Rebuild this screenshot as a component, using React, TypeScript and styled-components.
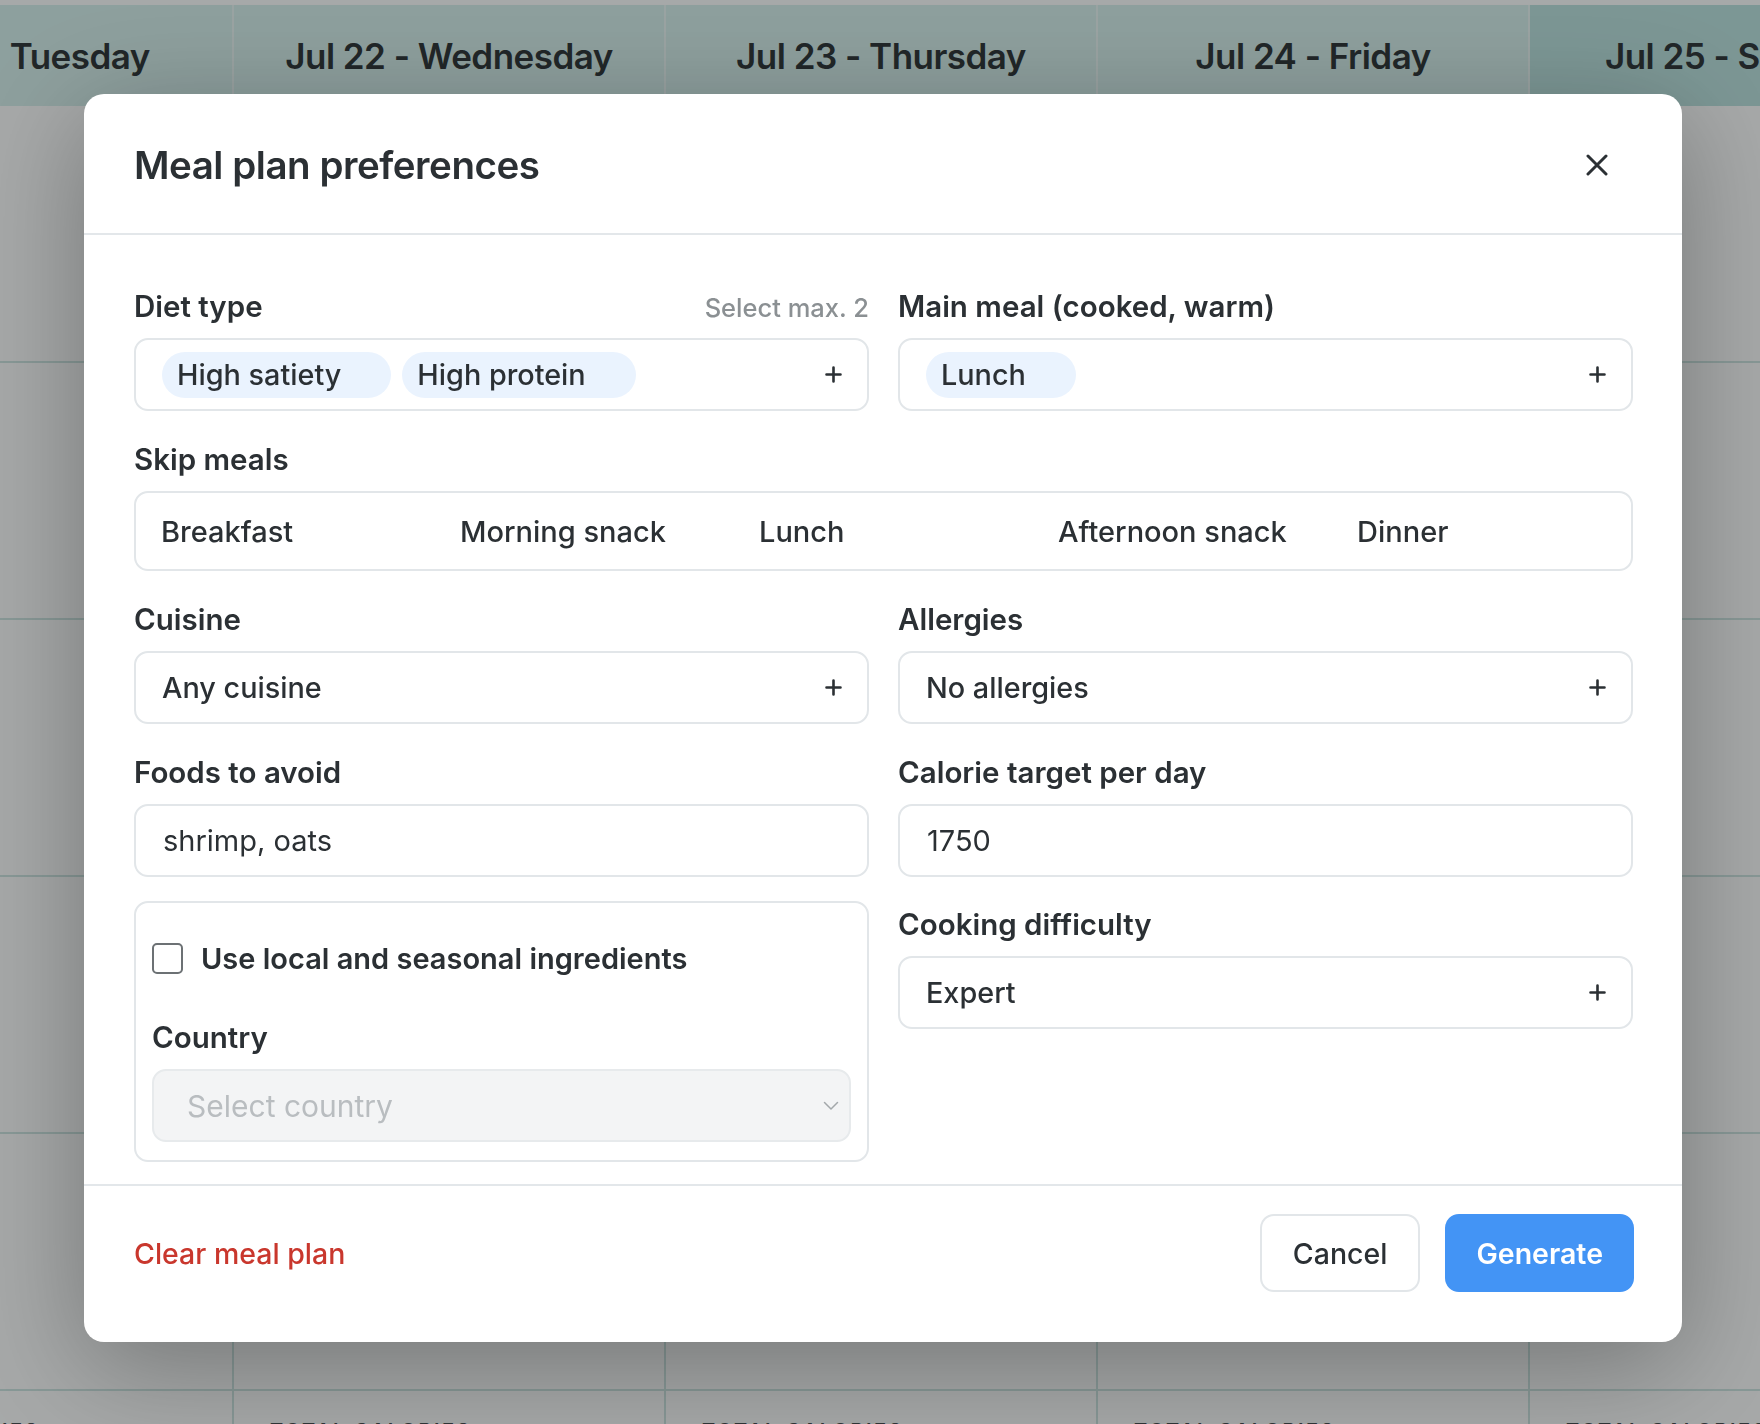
import React from "react";
import styled, { createGlobalStyle } from "styled-components";

const Global = createGlobalStyle`
	html, body {
		margin: 0;
		padding: 0;
		background: #ffffff;
		overflow: hidden;
	}
	body {
		font-family: Inter, "Noto Sans", "Liberation Sans", sans-serif;
		color: #2b3034;
	}
	* { box-sizing: border-box; }
`;

/* ---------- calendar behind the dialog ---------- */

const Page = styled.div`
	width: 1760px;
	height: 1424px;
	overflow: hidden;
	padding-top: 5px;
	background: #ffffff;
`;
const Calendar = styled.div`
	margin-left: -198px;
	width: calc(432px * 5);
`;
const DayHeader = styled.div`
	display: grid;
	grid-template-columns: repeat(5, 432px);
	height: 101px;
`;
const DayTitle = styled.div<{ $today?: boolean }>`
	display: flex;
	align-items: center;
	justify-content: center;
	padding-top: 1px;
	background: ${(p) => (p.$today ? "#bfe4e1" : "#d9f1ee")};
	border-right: 2px solid #ecf7f6;
	font-size: 35px;
	font-weight: 600;
	color: #33383b;
	letter-spacing: -0.015em;
	white-space: nowrap;
`;
const WeekRow = styled.div`
	display: grid;
	grid-template-columns: repeat(5, 432px);
	height: 257px;
	border-bottom: 2px solid #d0e6e3;
`;
const DayCell = styled.div`
	border-right: 2px solid #d0e6e3;
	padding: 28px 36px 0;
	font-size: 20px;
	font-weight: 600;
	letter-spacing: 0.12em;
	color: #4a4f52;
`;

/* ---------- dialog ---------- */

const Backdrop = styled.div`
	position: fixed;
	inset: 0;
	background: rgba(0, 8, 8, 0.35);
	padding: 94px 0 0 84px;
`;
const Dialog = styled.div`
	width: 1598px;
	background: #ffffff;
	border-radius: 20px;
	box-shadow: 0 24px 110px rgba(0, 0, 0, 0.3);
	display: flex;
	flex-direction: column;
`;
const DialogHeader = styled.header`
	display: flex;
	align-items: center;
	justify-content: space-between;
	padding: 47px 49px 44px 50px;
	border-bottom: 2px solid #e3e7ea;
`;
const Title = styled.h2`
	margin: 0;
	font-size: 38.5px;
	line-height: 48px;
	font-weight: 600;
	letter-spacing: -0.012em;
	color: #2b3034;
`;
const CloseButton = styled.button`
	width: 72px;
	height: 48px;
	border: 0;
	background: none;
	padding: 0;
	display: flex;
	align-items: center;
	justify-content: center;
	color: #2b3034;
	cursor: pointer;
`;
const DialogBody = styled.div`
	display: flex;
	flex-direction: column;
	gap: 31px;
	padding: 54px 49px 22px 50px;
`;
const TwoCols = styled.div`
	display: grid;
	grid-template-columns: 1fr 1fr;
	column-gap: 29px;
	align-items: start;
`;
const Stack = styled.div<{ $gap: number }>`
	display: flex;
	flex-direction: column;
	gap: ${(p) => p.$gap}px;
`;
const Field = styled.div`
	display: flex;
	flex-direction: column;
	gap: 15px;
`;
const LabelRow = styled.div`
	display: flex;
	align-items: baseline;
	justify-content: space-between;
`;
const Label = styled.label`
	font-size: 29.5px;
	line-height: 34px;
	font-weight: 600;
	color: #2b3034;
	white-space: nowrap;
`;
const Hint = styled.span`
	font-size: 25.5px;
	font-weight: 500;
	color: #8b9093;
`;
const Box = styled.div<{ $tall?: boolean }>`
	height: ${(p) => (p.$tall ? 80 : 73)}px;
	border: 2px solid #e2e6e9;
	border-radius: 14px;
	background: #ffffff;
	display: flex;
	align-items: center;
	padding: 0 25px 0 26px;
	gap: 11px;
	font-size: 28.8px;
	font-weight: 500;
	color: #2b3034;
`;
const Spacer = styled.span`
	flex: 1;
`;
const Chip = styled.span`
	height: 46px;
	border-radius: 23px;
	background: #eaf3fe;
	display: inline-flex;
	align-items: center;
	padding: 0 50px 0 15px;
	font-size: 28.8px;
	font-weight: 500;
	white-space: nowrap;
`;
const TextInput = styled.input`
	height: 73px;
	width: 100%;
	border: 2px solid #e2e6e9;
	border-radius: 14px;
	padding: 0 27px;
	font: inherit;
	font-size: 29px;
	font-weight: 400;
	color: #2b3034;
	outline: none;
	background: #ffffff;
`;
const SkipGrid = styled(Box)`
	display: grid;
	grid-template-columns: repeat(5, 1fr);
	padding: 0;
	gap: 0;
`;
const SkipOption = styled.span`
	padding-left: 25px;
	font-size: 29px;
	font-weight: 500;
	white-space: nowrap;
`;
const Card = styled.div`
	border: 2px solid #e2e6e9;
	border-radius: 14px;
	padding: 18px 16px;
	display: flex;
	flex-direction: column;
	gap: 25px;
`;
const CheckRow = styled.label`
	height: 74px;
	display: flex;
	align-items: center;
	gap: 18px;
	font-size: 29px;
	font-weight: 600;
	color: #2b3034;
`;
const CheckBox = styled.span`
	width: 31px;
	height: 31px;
	border: 2px solid #6c7174;
	border-radius: 5px;
	background: #ffffff;
	flex: none;
`;
const SelectBox = styled.div`
	height: 73px;
	border: 2px solid #e7eaec;
	border-radius: 14px;
	background: #f3f4f5;
	display: flex;
	align-items: center;
	justify-content: space-between;
	padding: 0 10px 0 33px;
	font-size: 30px;
	font-weight: 400;
	color: #b9bdc0;
`;
const DialogFooter = styled.footer`
	display: flex;
	align-items: center;
	justify-content: space-between;
	padding: 28px 48px 50px 50px;
	border-top: 2px solid #e3e7ea;
`;
const DangerLink = styled.button`
	border: 0;
	background: none;
	padding: 0;
	font: inherit;
	font-size: 28.5px;
	font-weight: 500;
	color: #c9372d;
	cursor: pointer;
`;
const Actions = styled.div`
	display: flex;
	gap: 25px;
`;
const Button = styled.button<{ $primary?: boolean }>`
	height: 78px;
	padding: 0 ${(p) => (p.$primary ? 29 : 31)}px;
	border-radius: 14px;
	font: inherit;
	font-size: 28.5px;
	font-weight: ${(p) => (p.$primary ? 600 : 500)};
	border: 2px solid ${(p) => (p.$primary ? "#4394f5" : "#e2e6e9")};
	background: ${(p) => (p.$primary ? "#4394f5" : "#ffffff")};
	color: ${(p) => (p.$primary ? "#ffffff" : "#2b3034")};
	cursor: pointer;
`;

const Plus = () => (
	<svg width="17" height="17" viewBox="0 0 17 17" fill="none">
		<path d="M8.5 1.5v14M1.5 8.5h14" stroke="#2b3034" strokeWidth="2.6" strokeLinecap="round" />
	</svg>
);

const CloseIcon = () => (
	<svg width="22" height="22" viewBox="0 0 22 22" fill="none">
		<path d="M2 2l18 18M20 2L2 20" stroke="#2b3034" strokeWidth="3" strokeLinecap="round" />
	</svg>
);

const Chevron = () => (
	<svg width="16" height="10" viewBox="0 0 16 10" fill="none">
		<path d="M1.5 1.5L8 8l6.5-6.5" stroke="#a3a8ab" strokeWidth="1.5" strokeLinecap="round" strokeLinejoin="round" />
	</svg>
);

const days = [
	{ title: "Jul 21 - Tuesday" },
	{ title: "Jul 22 - Wednesday" },
	{ title: "Jul 23 - Thursday" },
	{ title: "Jul 24 - Friday" },
	{ title: "Jul 25 - Saturday", today: true },
];

const skipMeals = ["Breakfast", "Morning snack", "Lunch", "Afternoon snack", "Dinner"];

function SelectField({ label, children, hint }: { label: string; children: React.ReactNode; hint?: string }) {
	return (
		<Field>
			<LabelRow>
				<Label>{label}</Label>
				{hint && <Hint>{hint}</Hint>}
			</LabelRow>
			<Box>
				{children}
				<Spacer />
				<Plus />
			</Box>
		</Field>
	);
}

export default function App() {
	return (
		<>
			<Global />
			<Page>
				<Calendar>
					<DayHeader>
						{days.map((d) => (
							<DayTitle key={d.title} $today={d.today}>
								{d.title}
							</DayTitle>
						))}
					</DayHeader>
					{[0, 1, 2, 3, 4].map((r) => (
						<WeekRow key={r}>
							{days.map((d) => (
								<DayCell key={d.title} />
							))}
						</WeekRow>
					))}
					<WeekRow>
						{days.map((d) => (
							<DayCell key={d.title}>TOTAL CALORIES</DayCell>
						))}
					</WeekRow>
				</Calendar>
			</Page>

			<Backdrop>
				<Dialog role="dialog">
					<DialogHeader>
						<Title>Meal plan preferences</Title>
						<CloseButton aria-label="Close">
							<CloseIcon />
						</CloseButton>
					</DialogHeader>

					<DialogBody>
						<TwoCols>
							<SelectField label="Diet type" hint="Select max. 2">
								<Chip>High satiety</Chip>
								<Chip>High protein</Chip>
							</SelectField>
							<SelectField label="Main meal (cooked, warm)">
								<Chip>Lunch</Chip>
							</SelectField>
						</TwoCols>

						<Field>
							<Label>Skip meals</Label>
							<SkipGrid $tall>
								{skipMeals.map((m) => (
									<SkipOption key={m}>{m}</SkipOption>
								))}
							</SkipGrid>
						</Field>

						<TwoCols>
							<SelectField label="Cuisine">Any cuisine</SelectField>
							<SelectField label="Allergies">No allergies</SelectField>
						</TwoCols>

						<TwoCols>
							<Stack $gap={24}>
								<Field>
									<Label>Foods to avoid</Label>
									<TextInput defaultValue="shrimp, oats" />
								</Field>
								<Card>
									<CheckRow>
										<CheckBox />
										Use local and seasonal ingredients
									</CheckRow>
									<Field>
										<Label>Country</Label>
										<SelectBox>
											Select country
											<Chevron />
										</SelectBox>
									</Field>
								</Card>
							</Stack>
							<Stack $gap={30}>
								<Field>
									<Label>Calorie target per day</Label>
									<TextInput defaultValue="1750" />
								</Field>
								<SelectField label="Cooking difficulty">Expert</SelectField>
							</Stack>
						</TwoCols>
					</DialogBody>

					<DialogFooter>
						<DangerLink>Clear meal plan</DangerLink>
						<Actions>
							<Button>Cancel</Button>
							<Button $primary>Generate</Button>
						</Actions>
					</DialogFooter>
				</Dialog>
			</Backdrop>
		</>
	);
}
